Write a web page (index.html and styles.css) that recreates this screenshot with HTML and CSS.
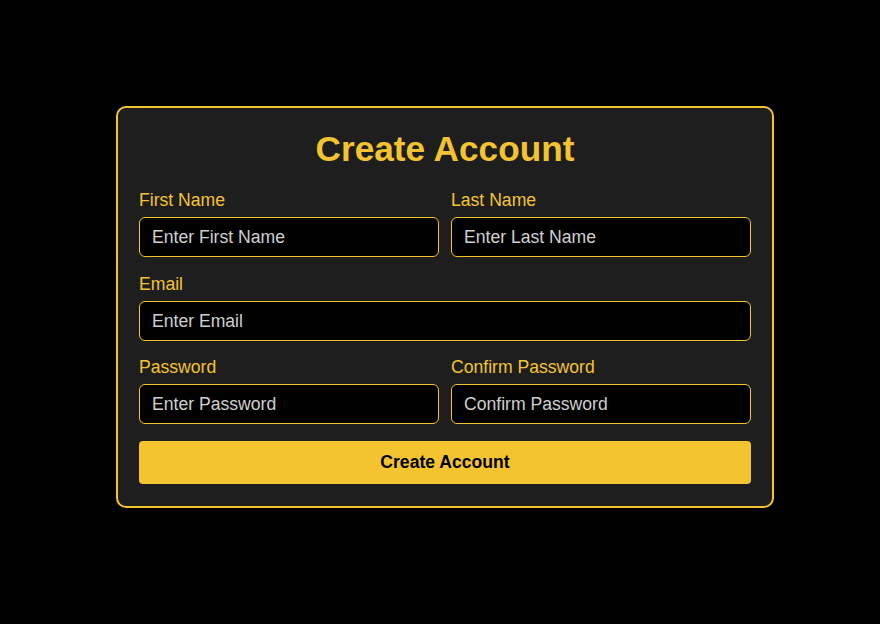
FILE: index.html
```html
<!DOCTYPE html>
<html lang="en">
<head>
<meta charset="utf-8">
<title>Create Account</title>
<link rel="stylesheet" href="styles.css">
</head>
<body>
<form class="card">
  <h1 class="title">Create Account</h1>
  <div class="row">
    <div class="field">
      <label class="label" for="fn">First Name</label>
      <input class="input" id="fn" type="text" placeholder="Enter First Name">
    </div>
    <div class="field">
      <label class="label" for="ln">Last Name</label>
      <input class="input" id="ln" type="text" placeholder="Enter Last Name">
    </div>
  </div>
  <div class="row row-tight">
    <div class="field">
      <label class="label" for="em">Email</label>
      <input class="input" id="em" type="email" placeholder="Enter Email">
    </div>
  </div>
  <div class="row">
    <div class="field">
      <label class="label" for="pw">Password</label>
      <input class="input" id="pw" type="password" placeholder="Enter Password">
    </div>
    <div class="field">
      <label class="label" for="cpw">Confirm Password</label>
      <input class="input" id="cpw" type="password" placeholder="Confirm Password">
    </div>
  </div>
  <button class="btn" type="button">Create Account</button>
</form>
</body>
</html>
```
FILE: styles.css
```css
* { box-sizing: border-box; }
html, body {
  margin: 0;
  background: #000;
}
body {
  font-family: "Liberation Sans", Arial, sans-serif;
  padding: 106px 0 0 116px;
  min-height: 624px;
}
.card {
  width: 658px;
  background: #1e1e1e;
  border: 2px solid #f4c430;
  border-radius: 10px;
  padding: 21px 21px 22px 21px;
  display: flex;
  flex-direction: column;
}
.title {
  margin: 0 0 21px;
  color: #f4c430;
  font-size: 35.2px;
  font-weight: bold;
  text-align: center;
  line-height: 40px;
}
.row {
  display: flex;
  gap: 12px;
  margin-bottom: 17px;
}
.row-tight { margin-bottom: 16px; }
.field {
  flex: 1;
  display: flex;
  flex-direction: column;
}
.label {
  color: #f4c430;
  font-size: 17.6px;
  line-height: 20px;
  margin-bottom: 7px;
}
.input {
  height: 40px;
  background: #000;
  border: 1px solid #f4c430;
  border-radius: 6px;
  padding: 0 12px;
  color: #ddd;
  font-family: "Liberation Sans", Arial, sans-serif;
  font-size: 17.6px;
  outline: none;
}
.input::placeholder {
  color: #cfcfcf;
  opacity: 1;
}
.btn {
  height: 43px;
  background: #f4c430;
  border: none;
  border-radius: 4px;
  color: #000;
  font-family: "Liberation Sans", Arial, sans-serif;
  font-size: 17.6px;
  font-weight: bold;
  cursor: pointer;
}
```
